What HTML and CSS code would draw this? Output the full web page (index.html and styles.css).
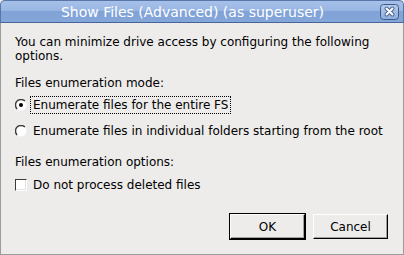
FILE: index.html
```html
<!DOCTYPE html>
<html lang="en">
<head>
    <meta charset="UTF-8">
    <title>Show Files (Advanced)</title>
    <link rel="stylesheet" href="styles.css">
</head>
<body>
    <div class="window">
        <div class="titlebar">
            <span class="title">Show Files (Advanced) (as superuser)</span>
            <span class="close">
                <svg width="19" height="16" viewBox="0 0 19 16">
                    <defs>
                        <linearGradient id="cg" x1="0" y1="0" x2="0" y2="1">
                            <stop offset="0" stop-color="#b6cbeb"/>
                            <stop offset="1" stop-color="#8eaddb"/>
                        </linearGradient>
                    </defs>
                    <rect x="0.5" y="0.5" width="18" height="15" rx="3" fill="url(#cg)" stroke="#3d5a88"/>
                    <path d="M6.5 4.5 L12.5 10.5 M12.5 4.5 L6.5 10.5" stroke="#4a6796" stroke-width="4" stroke-linecap="round"/>
                    <path d="M6.5 4.5 L12.5 10.5 M12.5 4.5 L6.5 10.5" stroke="#fff" stroke-width="2" stroke-linecap="round"/>
                </svg>
            </span>
        </div>
        <div class="content">
            <p class="intro">You can minimize drive access by configuring the following options.</p>

            <div class="group-label">Files enumeration mode:</div>
            <div class="option radio-row first">
                <svg class="radio" width="12" height="12" viewBox="0 0 12 12">
                    <circle cx="6" cy="6" r="5.5" fill="#fff"/>
                    <path d="M9.9 2.1 A5.5 5.5 0 0 0 2.1 9.9" stroke="#3c3c3c" stroke-width="1.4" fill="none"/>
                    <circle cx="6" cy="6" r="2" fill="#000"/>
                </svg>
                <span class="text focused">Enumerate files for the entire FS</span>
            </div>
            <div class="option radio-row second">
                <svg class="radio" width="12" height="12" viewBox="0 0 12 12">
                    <circle cx="6" cy="6" r="5.5" fill="#fff"/>
                    <path d="M9.9 2.1 A5.5 5.5 0 0 0 2.1 9.9" stroke="#3c3c3c" stroke-width="1.4" fill="none"/>
                </svg>
                <span class="text">Enumerate files in individual folders starting from the root</span>
            </div>

            <div class="group-label options-label">Files enumeration options:</div>
            <div class="option check-row">
                <span class="checkbox"></span>
                <span class="text">Do not process deleted files</span>
            </div>

            <div class="buttons">
                <button class="btn default">OK</button>
                <button class="btn">Cancel</button>
            </div>
        </div>
    </div>
</body>
</html>
```

FILE: styles.css
```css
body {
    margin: 0;
    font-family: "DejaVu Sans", sans-serif;
    font-size: 12px;
    line-height: 14px;
    color: #000;
    background: #edeceb;
}
.window {
    width: 404px;
    height: 255px;
    box-sizing: border-box;
    display: flex;
    flex-direction: column;
}
.titlebar {
    height: 23px;
    box-sizing: border-box;
    display: flex;
    align-items: flex-start;
    border: 1px solid #5775a6;
    border-bottom-color: #46659a;
    border-radius: 5px 5px 0 0;
    background: linear-gradient(#a6c0e9, #98b5e2 50%, #80a2d6 50%, #84a6d9);
}
.title {
    flex: 1;
    text-align: center;
    color: #fff;
    font-size: 14px;
    line-height: 20px;
    padding-top: 1px;
    padding-left: 4px;
}
.close {
    display: flex;
    margin: 3px 4px 0 0;
}
.content {
    flex: 1;
    display: flex;
    flex-direction: column;
    padding: 12px 14px 0 14px;
    border: 1px solid #9c9c9c;
    border-top: none;
}
.intro {
    margin: 0;
}
.group-label {
    margin-top: 13px;
}
.options-label {
    margin-top: 15px;
}
.option {
    display: flex;
    align-items: center;
    height: 18px;
}
.radio-row.first {
    margin-top: 6px;
}
.radio-row.second {
    margin-top: 8px;
}
.check-row {
    margin-top: 7px;
}
.radio {
    flex: none;
    margin-right: 3px;
}
.option .text {
    padding: 1px 2px;
    border: 1px dotted transparent;
}
.option .text.focused {
    border-color: #000;
}
.checkbox {
    flex: none;
    width: 12px;
    height: 12px;
    box-sizing: border-box;
    background: #fff;
    border: 1px solid;
    border-color: #3a3a3a #fff #fff #3a3a3a;
    box-shadow: inset -1px -1px #e2e2e2;
    margin-right: 3px;
}
.buttons {
    display: flex;
    justify-content: flex-end;
    gap: 8px;
    margin-top: 20px;
    padding-right: 1px;
}
.btn {
    width: 75px;
    height: 25px;
    box-sizing: border-box;
    font-family: "DejaVu Sans", sans-serif;
    font-size: 12px;
    color: #000;
    background: #edeceb;
    border: 1px solid;
    border-color: #fff #000 #000 #fff;
    box-shadow: inset -1px -1px #a0a0a0;
    padding: 0;
}
.btn.default {
    outline: 1px solid #000;
}
```
